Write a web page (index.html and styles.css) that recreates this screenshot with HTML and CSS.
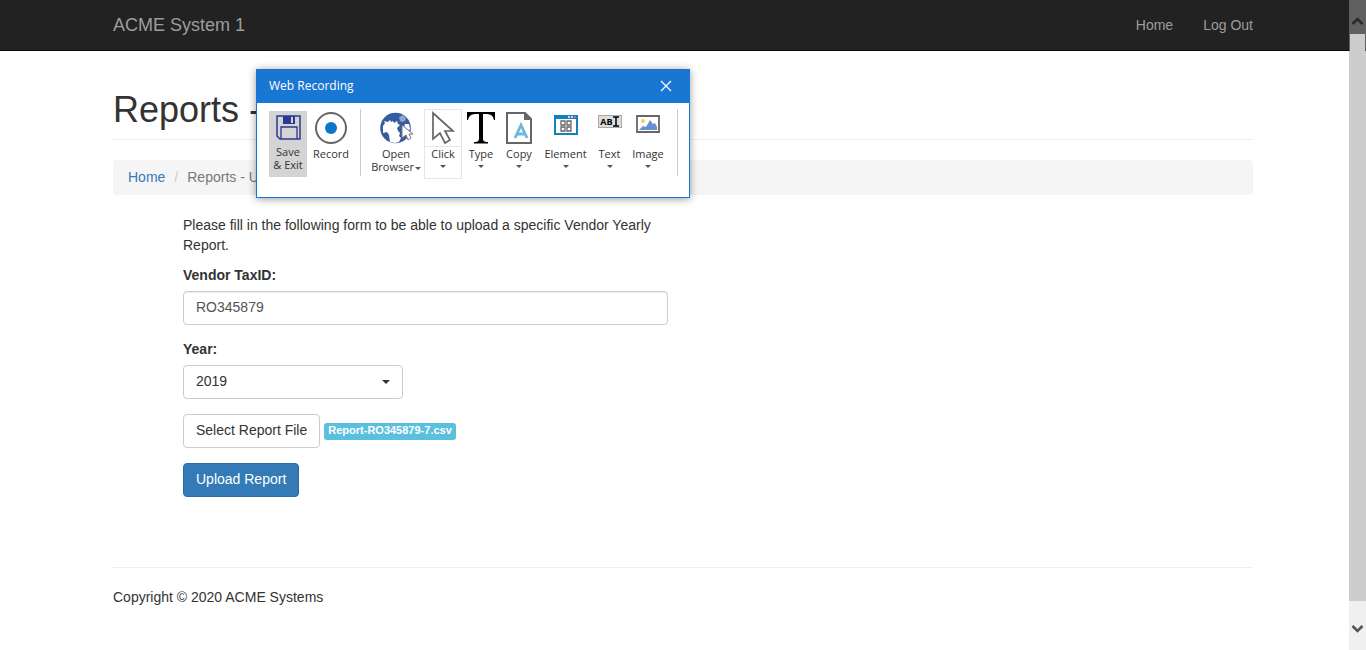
FILE: index.html
```html
<!DOCTYPE html>
<html lang="en">
<head>
<meta charset="utf-8">
<title>ACME System 1 - Reports</title>
<link rel="stylesheet" href="styles.css">
</head>
<body>
<header class="navbar">
  <nav class="container navbar-row">
    <a class="brand" href="#">ACME System 1</a>
    <div class="nav-links"><a href="#">Home</a><a href="#">Log Out</a></div>
  </nav>
</header>

<main class="container">
  <h1 class="page-header">Reports -</h1>
  <ol class="breadcrumb">
    <li><a href="#">Home</a></li>
    <li>Reports - U</li>
  </ol>
  <form class="report-form">
    <p class="intro">Please fill in the following form to be able to upload a specific Vendor Yearly Report.</p>
    <div class="form-group">
      <label for="tax-id">Vendor TaxID:</label>
      <input class="field" id="tax-id" type="text" value="RO345879">
    </div>
    <div class="form-group">
      <label for="year">Year:</label>
      <div class="select-wrap">
        <select class="field" id="year"><option>2019</option></select>
      </div>
    </div>
    <div class="file-row">
      <button class="btn" type="button">Select Report File</button>
      <span class="file-tag">Report-RO345879-7.csv</span>
    </div>
    <button class="btn btn-primary" type="button">Upload Report</button>
  </form>
  <footer class="footer">Copyright © 2020 ACME Systems</footer>
</main>

<section class="recorder" aria-label="Web Recording">
  <header class="recorder-title">
    <span>Web Recording</span>
    <button class="close" type="button" aria-label="Close">
      <svg width="12" height="12" viewBox="0 0 12 12"><path d="M1 1l10 10M11 1L1 11" stroke="#fff" stroke-width="1.2"/></svg>
    </button>
  </header>
  <div class="toolbar">
    <button class="tool tool-save" type="button">
      <svg width="26" height="26" viewBox="0 0 26 26"><path d="M2 2h23v23H5l-3-3z" fill="none" stroke="#2b3990" stroke-width="1.5"/><path d="M8 2h12v8H8z" fill="#2b3990"/><path d="M16 3h2v6h-2z" fill="#d4d4d4"/><path d="M6 25V13h16v12" fill="none" stroke="#2b3990" stroke-width="1.3"/></svg>
      <span>Save<br>&amp; Exit</span>
    </button>
    <button class="tool tool-record" type="button">
      <svg width="34" height="34" viewBox="0 0 34 34"><circle cx="17" cy="17" r="15" fill="#fff" stroke="#666" stroke-width="2"/><circle cx="17" cy="17" r="6" fill="#0a78c8"/></svg>
      <span>Record</span>
    </button>
    <i class="divider"></i>
    <button class="tool tool-browser" type="button">
      <svg width="34" height="34" viewBox="0 0 34 34"><circle cx="16.500" cy="17" r="15.300" fill="#345e9e"/><path d="M4 15l2-3-1-2 4 1 2-2 1 2 2-1 1 2 3-2 1 3 2 1-3 3 1 3 2 2-1 3 2 2-2 4-4 1-5-1-1-7-2-3-4 1z" fill="#fff"/><path d="M20 6l4-2 3 3-1 3-3 1-2-1z" fill="#fff" opacity=".45"/><path d="M26 13l4 0 1 5-2 2-4-4z" fill="#fff"/><path d="M23 14v13l4-3 2 5 3-2-2-4h4z" fill="#fff" stroke="#777"/></svg>
      <span>Open<br>Browser <i class="caret"></i></span>
    </button>
    <button class="tool tool-click" type="button">
      <svg width="34" height="34" viewBox="0 0 34 34"><path d="M7 2v26l7-6 5 10 5-3-5-9h8z" fill="#fff" stroke="#666" stroke-width="1.7"/></svg>
      <span>Click</span><i class="caret"></i>
    </button>
    <button class="tool tool-type" type="button">
      <svg width="30" height="34" viewBox="0 0 30 34"><path d="M1 1h28v8h-1q-1-6-7-6h-4v25q0 3 4 3h1v1.500H8V31h1q4 0 4-3V3H9Q3 3 2 9H1z" fill="#000"/></svg>
      <span>Type</span><i class="caret"></i>
    </button>
    <button class="tool tool-copy" type="button">
      <svg width="28" height="34" viewBox="0 0 28 34"><path d="M2 2h18l6 6v24H2z" fill="#fff" stroke="#666" stroke-width="2"/><path d="M19 1v8h8z" fill="#666"/><path d="M10 27l6-13 6 13M12 23h8" fill="none" stroke="#6fb7df" stroke-width="2.800"/></svg>
      <span>Copy</span><i class="caret"></i>
    </button>
    <button class="tool tool-element" type="button">
      <svg width="24" height="34" viewBox="0 0 24 34"><path d="M0 4h24v20H0z" fill="#1480bd"/><path d="M2 8h20v14H2z" fill="#fff"/><path d="M14 6h2m1 0h2" stroke="#fff" stroke-width="1.500"/><path d="M20 6h2" stroke="#f66" stroke-width="1.500"/><path d="M7 10h4v4H7zm6 0h4v4h-4zm-6 6h4v4H7zm6 0h4v4h-4z" fill="none" stroke="#666" stroke-width="1.300"/></svg>
      <span>Element</span><i class="caret"></i>
    </button>
    <button class="tool tool-text" type="button">
      <span class="text-icon">AB<svg width="6" height="11" viewBox="0 0 6 11"><path d="M0 1h6M3 1v9M0 10h6" fill="none" stroke="#000" stroke-width="1.500"/></svg></span>
      <span>Text</span><i class="caret"></i>
    </button>
    <button class="tool tool-image" type="button">
      <svg width="24" height="34" viewBox="0 0 24 34"><path d="M1 5h22v16H1z" fill="#fff" stroke="#666" stroke-width="1.800"/><circle cx="7" cy="10" r="2" fill="#f5cf50"/><path d="M3 19l4-4 3 1 4-7 3 4 2-1 2 4v3z" fill="#6691cc"/></svg>
      <span>Image</span><i class="caret"></i>
    </button>
    <i class="divider"></i>
  </div>
</section>

<div class="scrollbar" aria-hidden="true">
  <div class="scroll-up"><svg width="13" height="12" viewBox="0 0 13 12"><path d="M1.500 9l5-5 5 5" fill="none" stroke="#2b2b2b" stroke-width="2.600"/></svg></div>
  <div class="scroll-thumb"></div>
  <div class="scroll-down"><svg width="13" height="12" viewBox="0 0 13 12"><path d="M1.500 3l5 5 5-5" fill="none" stroke="#555" stroke-width="2.600"/></svg></div>
</div>
</body>
</html>
```
FILE: styles.css
```css
* { box-sizing: border-box; }
html { overflow: hidden; }
body {
  margin: 0;
  background: #fff;
  color: #333;
  font: 14px/20px "Liberation Sans", Arial, sans-serif;
}
a { color: #337ab7; text-decoration: none; }
button, input, select { font: inherit; }
svg { display: block; fill: none; }

.container { max-width: 1170px; margin: 0 auto; padding: 0 15px; }
.navbar { background: #222; border-bottom: 1px solid #080808; }
.navbar-row { display: flex; justify-content: space-between; align-items: center; min-height: 50px; }
.navbar a { color: #9d9d9d; }
.brand { font-size: 18px; }
.nav-links { display: flex; gap: 30px; }

.page-header {
  margin: 39px 0 20px;
  padding-bottom: 9px;
  border-bottom: 1px solid #eee;
  font-size: 36px;
  line-height: 40px;
  font-weight: 400;
}
.breadcrumb {
  display: flex;
  margin: 0 0 20px;
  padding: 7px 15px 8px;
  list-style: none;
  background: #f5f5f5;
  border-radius: 4px;
  color: #777;
}
.breadcrumb li + li::before { content: "/"; padding: 0 9px; color: #ccc; }

.report-form { max-width: 555px; padding-left: 70px; }
.intro { margin: 0 0 10px; }
.form-group { margin-bottom: 14px; }
.form-group label { display: block; margin-bottom: 6px; font-weight: 700; }
.field {
  display: block;
  width: 100%;
  height: 34px;
  padding: 5px 12px 7px;
  border: 1px solid #ccc;
  border-radius: 4px;
  background: #fff;
  color: #555;
}
input.field { box-shadow: inset 0 1px 1px rgba(0, 0, 0, .08); }
select.field { appearance: none; color: #333; }
.select-wrap { position: relative; width: 220px; }
.select-wrap::after {
  content: "";
  position: absolute;
  right: 13px;
  top: 15px;
  border: 4px solid transparent;
  border-top-color: #333;
  border-bottom: 0;
  pointer-events: none;
}
.file-row { display: flex; align-items: center; gap: 4px; margin: 15px 0; }
.btn {
  height: 34px;
  padding: 5px 12px 7px;
  border: 1px solid #ccc;
  border-radius: 4px;
  background: #fff;
  color: #333;
  line-height: 20px;
}
.btn-primary { background: #337ab7; border-color: #2e6da4; color: #fff; }
.file-tag {
  padding: 0 4px 2px;
  border-radius: 3px;
  background: #5bc0de;
  color: #fff;
  font-size: 11px;
  line-height: 15px;
  font-weight: 700;
}
.footer { margin-top: 70px; padding-top: 19px; border-top: 1px solid #eee; }

/* Floating recorder window */
.recorder {
  position: absolute;
  left: 256px;
  top: 69px;
  border: 1px solid #1976d2;
  background: #fff;
  box-shadow: 0 1px 8px rgba(0, 0, 0, .4);
  color: #333;
  font-family: "Open Sans", "Noto Sans", sans-serif;
}
.recorder-title {
  display: flex;
  justify-content: space-between;
  align-items: center;
  height: 33px;
  padding: 0 17px 2px 12px;
  background: #1976d2;
  color: #fff;
  font-size: 12px;
}
.close { padding: 0; border: 0; background: none; }
.toolbar { display: flex; align-items: flex-start; padding: 6px 11px 18px 12px; }
.tool {
  display: flex;
  flex-direction: column;
  align-items: center;
  width: 38px;
  height: 70px;
  padding: 2px 0 0;
  border: 0;
  background: none;
  color: #333;
  font-size: 11px;
  line-height: 13px;
  white-space: nowrap;
}
.tool > svg { flex: none; margin-bottom: 2px; }
.tool-save { height: 66px; margin-top: 2px; padding-top: 3px; background: #d4d4d4; }
.tool-save > svg { margin-bottom: 5px; }
.tool-record { width: 48px; }
.tool-browser { width: 54px; }
.tool-click {
  margin: 0 0 0 1px;
  padding-top: 1px;
  border: 1px solid #e6e6e6;
  background: linear-gradient(#e6e6e6, #e6e6e6) 0 36px / 100% 1px no-repeat;
}
.tool-element { width: 55px; }
.tool-text { width: 33px; }
.tool-image { width: 44px; }
.divider { width: 1px; height: 67px; background: #ccc; margin: 0 8px 0 5px; }
.divider:last-child { margin: 0 0 0 7px; }
.caret {
  display: inline-block;
  border: 3px solid transparent;
  border-top-color: #555;
  border-bottom: 0;
  vertical-align: middle;
}
.tool > .caret { margin-top: 5px; }
.tool-browser .caret { margin-left: -2px; }
.text-icon {
  display: flex;
  align-items: center;
  justify-content: center;
  width: 24px;
  height: 13px;
  margin: 4px 0 19px;
  border: 1px solid #aaa;
  background: #ddd;
  color: #000;
  font-size: 9px;
  font-weight: 700;
}

/* Page scrollbar */
.scrollbar {
  position: fixed;
  top: 0;
  right: 0;
  bottom: 0;
  display: flex;
  flex-direction: column;
  width: 17px;
  background: #f0f0f0;
}
.scroll-up { height: 34px; padding: 15px 2px 0; background: #606060; }
.scroll-thumb { flex: 1; background: linear-gradient(90deg, #606060 1px, transparent 1px 16px, #606060 16px) 0 0 / 100% 17px no-repeat #cdcdcd; }
.scroll-down { height: 49px; padding: 22px 2px 0; }
```
